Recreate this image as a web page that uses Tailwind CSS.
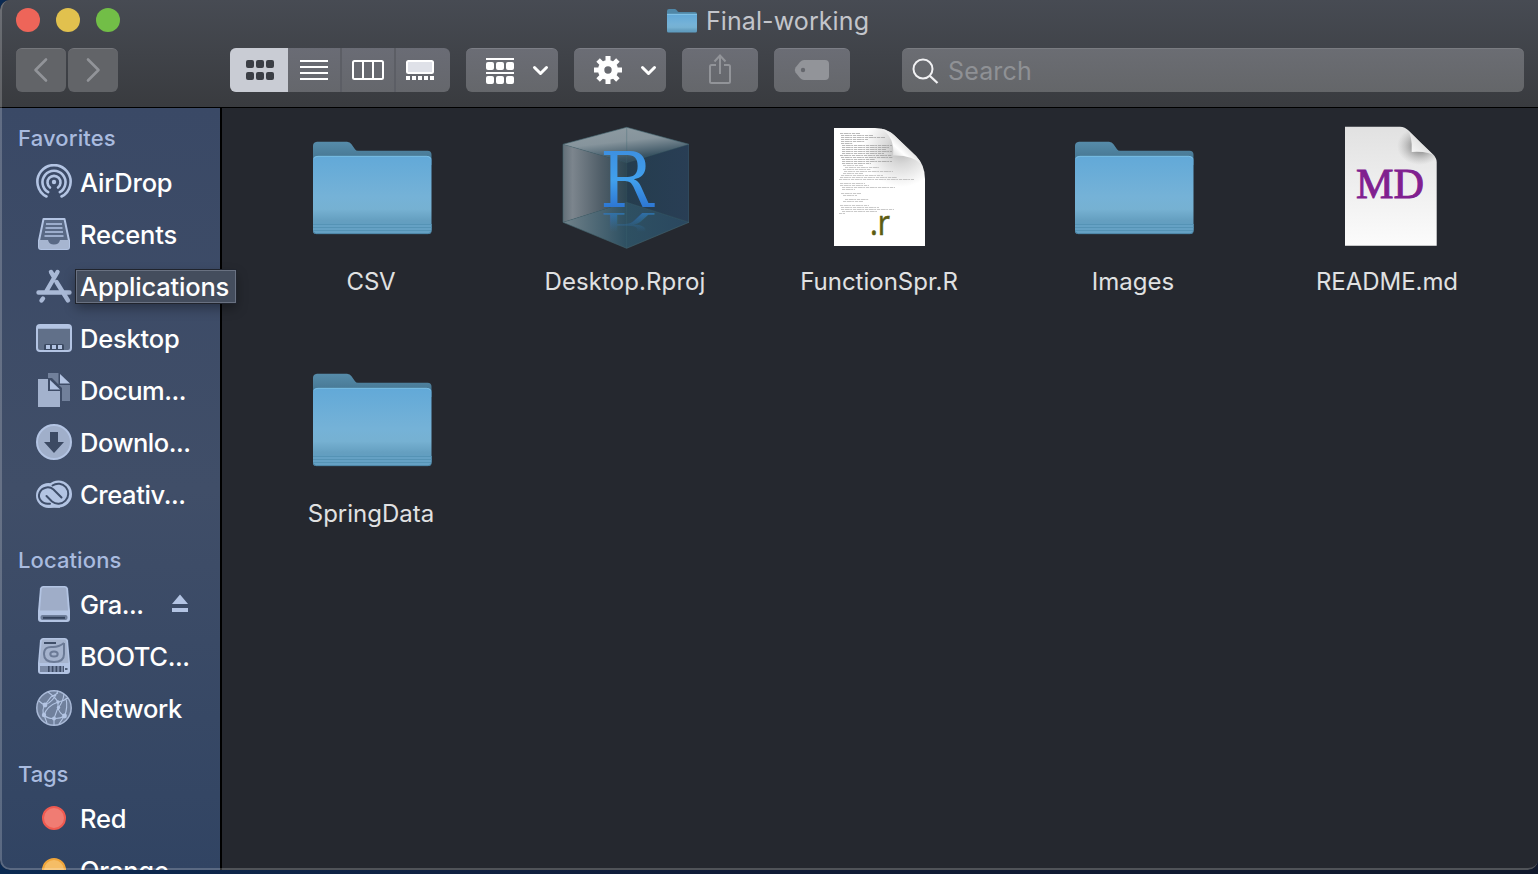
<!DOCTYPE html>
<html lang="en">
<head>
<meta charset="utf-8">
<title>Final-working</title>
<script src="https://cdn.jsdelivr.net/npm/@tailwindcss/browser@4"></script>
</head>
<body class="w-[1538px] h-[874px] overflow-hidden bg-gradient-to-r from-[#0b2a52] via-[#101a35] to-[#10182b] font-['Inter','Liberation_Sans',sans-serif]">
<svg width="0" height="0" class="absolute">
  <defs>
    <linearGradient id="front" x1="0" y1="0" x2="0" y2="1"><stop offset="0" stop-color="#62a9d8"/><stop offset=".55" stop-color="#75b2d7"/><stop offset=".72" stop-color="#76b1d2"/><stop offset=".87" stop-color="#659fc0"/><stop offset="1" stop-color="#5c9bc0"/></linearGradient>
    <linearGradient id="back" x1="0" y1="0" x2="0" y2="1"><stop offset="0" stop-color="#568caa"/><stop offset="1" stop-color="#416f8a"/></linearGradient>
    <symbol id="folder" viewBox="0 0 128 128">
      <path d="M6 40V23q0-4 4-4.300H40q3 0 4.500 2.500l3.500 5q1 1.500 3 1.500H120.500q4 0 4 4V42z" fill="url(#back)"/>
      <path d="M6 107V37q0-4 4-4H120.500q4 0 4 4V107z" fill="url(#front)"/>
      <path d="M7 35.500q1-2.200 4-2.200H119.500q3 0 4 2.200" fill="none" stroke="#80c3e6" stroke-width=".8"/>
      <path d="M6 101H124.500V108q0 3-3 3H9q-3 0-3-3z" fill="#65a1c4"/>
      <path d="M6 101.500H124.500M6 104.500H124.500M6 107.500H124.500" stroke="#528fb1" stroke-width=".8"/>
      <path d="M6.500 108.500q.5 2.200 3 2.200H121q2.500 0 3-2.200" fill="none" stroke="#427b9a" stroke-width=".8"/>
    </symbol>
  </defs>
</svg>
<div class="relative flex h-[870px] w-[1538px] flex-col overflow-hidden rounded-bl-[10px] rounded-br-[10px] rounded-tl-[10px] bg-[#25282f]">
  <header class="h-[108px] shrink-0 border-b border-black bg-gradient-to-b from-[#474b53] to-[#393b3f]">
    <div class="grid h-12 grid-cols-[1fr_auto_1fr] pr-[2px]">
      <div class="flex gap-4 pt-2 pl-4">
        <i class="size-6 rounded-full bg-[#ee6559]"></i><i class="size-6 rounded-full bg-[#e1c14e]"></i><i class="size-6 rounded-full bg-[#72be47]"></i>
      </div>
      <div class="flex h-[42px] items-center gap-[9px]">
        <svg width="30" height="25" viewBox="0 2 30 25"><path d="M0 10V4q0-2 2-2H8q1 0 2 1.500T12 5H28q2 0 2 2v4z" fill="#4f87a7"/><path d="M0 7H30V24q0 1.500-1.500 1.500h-27Q0 25.500 0 24z" fill="url(#front)"/><path d="M0 7.300H30" stroke="#8fcdec" stroke-width=".8"/></svg>
        <span class="text-[25px] leading-none tracking-[0.1px] text-[#c3c5cb]">Final-working</span>
      </div>
    </div>
    <div class="flex h-11 pl-4">
      <div class="flex w-[102px] gap-[2px]">
        <div class="flex w-[50px] items-center justify-center rounded-md border-t border-[#75777c] bg-[#626468]"><svg width="50" height="43" viewBox="0 1 50 43" fill="none" stroke="#929499" stroke-width="2.600" stroke-linecap="round" stroke-linejoin="round"><path d="M30 11.500L19.500 22L30 32.500"/></svg></div>
        <div class="flex w-[50px] items-center justify-center rounded-md border-t border-[#75777c] bg-[#626468]"><svg width="50" height="43" viewBox="0 1 50 43" fill="none" stroke="#929499" stroke-width="2.600" stroke-linecap="round" stroke-linejoin="round"><path d="M20 11.500L30.500 22L20 32.500"/></svg></div>
      </div>
      <div class="ml-[112px] flex w-[220px] overflow-hidden rounded-md bg-gradient-to-b from-[#6a6c75] to-[#65676c]">
        <div class="w-[58px] bg-[#c9ccd4]"><svg width="58" height="44" fill="#3b3e45"><g id="six"><rect x="16" y="12" width="8" height="8" rx="2"/><rect x="26" y="12" width="8" height="8" rx="2"/><rect x="36" y="12" width="8" height="8" rx="2"/></g><use href="#six" y="12"/></svg></div>
        <div class="w-[54px] border-r-2 border-[#5c5e65]"><svg width="52" height="44"><path d="M12 13H40M12 19H40M12 25H40M12 31H40" stroke="#fff" stroke-width="2"/></svg></div>
        <div class="w-[54px] border-r-2 border-[#5c5e65]"><svg width="52" height="44" fill="none" stroke="#fff" stroke-width="2"><rect x="11" y="13" width="30" height="18" rx="1.500"/><path d="M21 13V31M31 13V31"/></svg></div>
        <div class="w-[54px]"><svg width="54" height="44"><rect x="11" y="13" width="26" height="12" rx="1.500" fill="#dfe1e8" stroke="#fff" stroke-width="2"/><path d="M10 30H38" stroke="#fff" stroke-width="4" stroke-dasharray="4 2"/></svg></div>
      </div>
      <div class="ml-4 w-[92px] rounded-md border-t border-[#7c7e86] bg-gradient-to-b from-[#6b6d75] to-[#65676b]"><svg width="92" height="43" viewBox="0 1 92 43" fill="#fff"><path d="M20 10H48v2H20zM20 24H48v2H20z"/><g id="trio"><rect x="20" y="14" width="8" height="8" rx="2"/><rect x="30" y="14" width="8" height="8" rx="2"/><rect x="40" y="14" width="8" height="8" rx="2"/></g><use href="#trio" y="14"/><path d="M68.500 19.500L74.500 25.500L80.500 19.500" fill="none" stroke="#fff" stroke-width="3" stroke-linecap="round" stroke-linejoin="round"/></svg></div>
      <div class="ml-4 w-[92px] rounded-md border-t border-[#7c7e86] bg-gradient-to-b from-[#6b6d75] to-[#65676b]"><svg width="92" height="43" viewBox="0 1 92 43" fill="none" stroke="#fff"><circle cx="34" cy="22" r="6.900" stroke-width="6.400"/><path d="M34 8v5M34 31v5M20 22h5M43 22h5M24.100 12.100l3.500 3.500M40.400 28.400l3.500 3.500M43.900 12.100l-3.500 3.500M27.600 28.400l-3.500 3.500" stroke-width="5"/><path d="M68.500 19.500L74.500 25.500L80.500 19.500" stroke-width="3" stroke-linecap="round" stroke-linejoin="round"/></svg></div>
      <div class="ml-4 w-[76px] rounded-md border-t border-[#7c7e86] bg-gradient-to-b from-[#6b6d75] to-[#65676b]"><svg width="76" height="43" viewBox="0 1 76 43" fill="none" stroke="#929499" stroke-width="2"><path d="M34 17H29.500Q28 17 28 18.500V33.500Q28 35 29.500 35H46.500Q48 35 48 33.500V18.500Q48 17 46.500 17H42M38 26V8M32.500 13.500L38 7.500L43.500 13.500"/></svg></div>
      <div class="ml-4 w-[76px] rounded-md border-t border-[#7c7e86] bg-gradient-to-b from-[#6b6d75] to-[#65676b]"><svg width="76" height="43" viewBox="0 1 76 43"><path d="M30 12H51Q55 12 55 16V28Q55 32 51 32H30Q28 32 26 30L21.500 24.500Q20 22 21.500 19.500L26 14Q28 12 30 12z" fill="#929499"/><circle cx="29" cy="22" r="2.200" fill="#65676d"/></svg></div>
      <div class="ml-[52px] flex w-[622px] items-center rounded-md border-t border-[#7a7c81] bg-gradient-to-b from-[#6b6d73] to-[#646669]">
        <svg width="46" height="43" viewBox="0 1 46 43" fill="none" stroke="#f1f1f3" stroke-width="2"><circle cx="21" cy="21" r="9.500"/><path d="M28 28L35.500 35" stroke-width="2.300"/></svg>
        <span class="pt-[2px] text-[25px] leading-none tracking-[0.15px] text-[#8f9195]">Search</span>
      </div>
    </div>
  </header>
  <div class="flex min-h-0 flex-1">
    <nav class="flex w-[222px] shrink-0 flex-col gap-5 border-r-2 border-black bg-gradient-to-b from-[#3a4966] via-[#404e68] to-[#314463] pt-[11px] pl-[18px] text-[25.5px] font-medium tracking-[-0.2px] whitespace-nowrap text-white">
      <section>
        <h2 class="flex h-[38px] items-center text-[22px] tracking-[0.15px] text-[#a9bbdf]">Favorites</h2>
        <div class="flex h-[52px] items-center gap-2 pl-[18px]"><svg width="36" height="38" viewBox="0 0 36 38" class="shrink-0" fill="none" stroke="#b3c4e3" stroke-width="2.600" stroke-linecap="round"><path d="M10.500 32.500A16.600 16.600 0 1 1 25.500 32.500"/><path d="M12.200 28.200A11.500 11.500 0 1 1 23.800 28.200"/><path d="M14 23.500A6.500 6.500 0 1 1 22 23.500"/><circle cx="18" cy="18" r="2.200" fill="#b3c4e3" stroke="none"/></svg><span>AirDrop</span></div>
        <div class="flex h-[52px] items-center gap-2 pl-[18px]"><svg width="36" height="38" viewBox="0 0 36 38" class="shrink-0"><path d="M7.500 3H28.500L33 24.500V31q0 2-2 2H5q-2 0-2-2V24.500z" fill="#596985" stroke="#b3c4e3" stroke-width="2" stroke-linejoin="round"/><path d="M3 24H12Q13 28.500 18 28.500T24 24H33V31q0 2-2 2H5q-2 0-2-2z" fill="#a6b5d0"/><path d="M10 8H26M9.500 12H26.500M9 16H27M8.500 20H27.500" stroke="#b3c4e3" stroke-width="1.700"/></svg><span>Recents</span></div>
        <div class="relative flex h-[52px] items-center pl-[18px]"><svg width="36" height="38" viewBox="0 0 36 38" class="shrink-0" fill="none" stroke="#a9b9d6" stroke-width="4.400" stroke-linecap="round"><path d="M2.500 24.500H33.500M21.500 4L10.500 23M15 4L18 9M20.500 14L32 32.500M7 30.500L5.500 32.500"/></svg>
          <div class="absolute top-[9px] left-[58px] z-10 flex h-[33px] w-[160px] items-center border border-[#697181] bg-[#444d5d] pt-[2px] pl-[3px] shadow-[0_0_0_1px_#20242d,0_5px_12px_rgba(0,0,0,0.35)]">Applications</div>
        </div>
        <div class="flex h-[52px] items-center gap-2 pl-[18px]"><svg width="36" height="38" viewBox="0 0 36 38" class="shrink-0"><rect x="1" y="5" width="34" height="26" rx="3" fill="#617089" stroke="#b3c4e3" stroke-width="2"/><path d="M2 7H34" stroke="#b3c4e3" stroke-width="3.500"/><path d="M8 30V25.500q0-1.500 1.500-1.500H26.500q1.500 0 1.500 1.500V30z" fill="#3c4a62"/><path d="M10 27H26" stroke="#b3c4e3" stroke-width="4" stroke-dasharray="4 2"/></svg><span>Desktop</span></div>
        <div class="flex h-[52px] items-center gap-2 pl-[18px]"><svg width="36" height="38" viewBox="0 0 36 38" class="shrink-0"><path d="M12 1H22.500V13H34V29H26V16L16 6H12z" fill="#71809b"/><path d="M24 2L34 11.500H24z" fill="#b3c4e3"/><path d="M2 7H12V19H24V35H2z" fill="#a3b2cd"/><path d="M14 8L24 17.500H14z" fill="#b3c4e3"/></svg><span class="tracking-[-0.45px]">Docum...</span></div>
        <div class="flex h-[52px] items-center gap-2 pl-[18px]"><svg width="36" height="38" viewBox="0 0 36 38" class="shrink-0"><circle cx="18" cy="18" r="17" fill="#a0afca" stroke="#b3c4e3" stroke-width="2"/><path d="M14 8H22V18H28L18 29L8 18H14z" fill="#3c4a63"/></svg><span class="tracking-[-0.5px]">Downlo...</span></div>
        <div class="flex h-[52px] items-center gap-2 pl-[18px]"><svg width="36" height="38" viewBox="0 0 36 38" class="shrink-0"><g fill="#b3c4e3"><circle cx="12.500" cy="19.500" r="12.500"/><circle cx="22.500" cy="18" r="13.500"/><path d="M12 24H24V31.800H12z"/></g><g fill="none" stroke="#3f4e6a" stroke-width="2" stroke-linecap="round"><path d="M14 27.800H12A8.700 8.200 0 1 1 17.500 13.500L25.500 21.500"/><path d="M16.500 9.500A10 10 0 1 1 16 25.500L10.500 20"/></g></svg><span class="tracking-[-0.4px]">Creativ...</span></div>
      </section>
      <section>
        <h2 class="flex h-[38px] items-center text-[22px] tracking-[0.1px] text-[#a9bbdf]">Locations</h2>
        <div class="flex h-[52px] items-center gap-2 pl-[18px]"><svg width="36" height="38" viewBox="0 0 36 38" class="shrink-0"><path d="M7 0H29q2.500 0 3 2.500L34 25v8q0 3-3 3H5q-3 0-3-3V25L4 2.500Q4.500 0 7 0z" fill="#b3c4e3"/><path d="M7.500 1.500H28.500q1.500 0 1.800 1.500L32 24.500H4L5.700 3q.3-1.500 1.800-1.500z" fill="#9fadc8"/><rect x="4.500" y="29" width="27" height="5" rx="2" fill="#6f7f9b"/><path d="M7 31.800H29" stroke="#34435d" stroke-width="2"/></svg><span class="w-[64px] tracking-[-0.5px]">Gra...</span><svg width="16" height="22" viewBox="0 0 16 22" class="ml-[20px]" fill="#b3c4e3"><path d="M8 .5L16 10H0zM0 14H16v4H0z"/></svg></div>
        <div class="flex h-[52px] items-center gap-2 pl-[18px]"><svg width="36" height="38" viewBox="0 0 36 38" class="shrink-0"><path d="M7 0H29q2.500 0 3 2.500L34 25v8q0 3-3 3H5q-3 0-3-3V25L4 2.500Q4.500 0 7 0z" fill="#b3c4e3"/><path d="M7.500 1.500H28.500q1.500 0 1.800 1.500L32.500 25H3.500L5.700 3q.3-1.500 1.800-1.500z" fill="#a5b3cd"/><path d="M8 5H20" stroke="#3f4e68" stroke-width="2"/><path d="M28 5V16Q28 24 18 24T8 16T17 9Q23 9 28 5" fill="none" stroke="#6b7a96" stroke-width="2"/><ellipse cx="18" cy="16" rx="3.700" ry="2.600" fill="none" stroke="#6b7a96" stroke-width="2"/><rect x="4" y="28" width="24" height="6" fill="#7b8aa6"/><path d="M12 31H28" stroke="#3c4a64" stroke-width="6" stroke-dasharray="1.600 2.200"/><rect x="29" y="30" width="2.500" height="2" fill="#4f5e78"/></svg><span class="tracking-[-0.4px]">BOOTC...</span></div>
        <div class="flex h-[52px] items-center gap-2 pl-[18px]"><svg width="36" height="38" viewBox="0 0 36 38" class="shrink-0"><circle cx="18" cy="18" r="17.200" fill="#70809c" stroke="#a9b9d7" stroke-width="1.500"/><g fill="none" stroke="#b3c4e3" stroke-width="1.100"><path d="M3 11Q6 14 9 15Q17 12 22 1M9 15Q5.500 20 8 25Q12 29 18 28.500Q24 29 28.500 26Q23 23 22 17.500V12Q19 7 12 2M22 12Q28 11 32 8M22.500 17.500Q27 12 28 4M22 17.500Q20 23 18 28.500V35M8 25L11 33M9 15L15 7L22 3M22 12Q11 16 8 25M28.500 26Q32 18 30 8M28.500 26L23 34"/></g><g fill="#b3c4e3"><circle cx="9" cy="15" r="2.400"/><circle cx="22" cy="12" r="1.700"/><circle cx="22.500" cy="17.500" r="1.700"/><circle cx="8" cy="25" r="2.200"/><circle cx="18" cy="28.500" r="2"/><circle cx="28.500" cy="26" r="2.400"/></g></svg><span class="tracking-[-0.3px]">Network</span></div>
      </section>
      <section>
        <h2 class="flex h-[38px] items-center text-[22px] tracking-[-0.1px] text-[#a9bbdf]">Tags</h2>
        <div class="flex h-[52px] items-center gap-[14px] pl-6"><i class="mb-[2px] size-6 rounded-full border-2 border-[#ef5a50] bg-[#f07c73]"></i><span>Red</span></div>
        <div class="flex h-[52px] items-center gap-[14px] pl-6"><i class="mb-[2px] size-6 rounded-full border-2 border-[#f0a53a] bg-[#f5bd66]"></i><span>Orange</span></div>
      </section>
    </nav>
    <main class="grid flex-1 auto-rows-[232px] grid-cols-[repeat(5,254px)] content-start pt-[15px] pl-[22px] text-[24px] leading-none text-[#e0e1e2]">
      <figure class="flex flex-col items-center"><svg width="128" height="128"><use href="#folder"/></svg><figcaption class="mt-[19px] tracking-[-0.2px]">CSV</figcaption></figure>
      <figure class="flex flex-col items-center">
        <svg width="128" height="128" viewBox="0 0 128 128">
          <defs>
            <linearGradient id="cl" x1="0" x2="1"><stop offset="0" stop-color="#626f78"/><stop offset=".15" stop-color="#7c858d"/><stop offset=".6" stop-color="#505e68"/><stop offset="1" stop-color="#2c4552"/></linearGradient>
            <linearGradient id="ct" x1=".3" y1="0" x2=".7" y2="1"><stop offset="0" stop-color="#8e9ba2"/><stop offset=".4" stop-color="#86949c"/><stop offset=".8" stop-color="#3c5564"/><stop offset="1" stop-color="#2d4555"/></linearGradient>
            <linearGradient id="cb" x1="0" x2="1"><stop offset="0" stop-color="#71828a"/><stop offset=".5" stop-color="#2e5062"/><stop offset="1" stop-color="#2a475f"/></linearGradient>
            <linearGradient id="cr" x1="0" x2="1"><stop offset="0" stop-color="#253d4e"/><stop offset="1" stop-color="#293e55"/></linearGradient>
            <linearGradient id="rf" x1="0" y1="0" x2="0" y2="1"><stop offset=".15" stop-color="#3d8fe0"/><stop offset=".5" stop-color="#41a0ec"/><stop offset=".85" stop-color="#2a70cf"/></linearGradient>
            <linearGradient id="rr" gradientUnits="userSpaceOnUse" x1="0" y1="-50" x2="0" y2="0"><stop offset=".1" stop-color="#2f70a8" stop-opacity="0"/><stop offset="1" stop-color="#2f78b8" stop-opacity=".8"/></linearGradient>
          </defs>
          <path d="M2 21.300L65.700 39.700V79.300L2 99.300z" fill="url(#cl)"/>
          <path d="M128 21.300L65.700 39.700V79.300L128 99.300z" fill="url(#cr)"/>
          <path d="M2 99.300L65.700 79.300L128 99.300L65.700 125.300z" fill="url(#cb)"/>
          <path d="M65.700 4.300L128 21.300L65.700 39.700L2 21.300z" fill="url(#ct)"/>
          <path d="M65.700 4.300V125.300M2 21.300L65.700 39.700L128 21.300M2 99.300L65.700 79.300L128 99.300" fill="none" stroke="#3c6674" stroke-opacity=".35"/>
          <path d="M65.700 4.300L128 21.300V99.300L65.700 125.300L2 99.300V21.300z" fill="none" stroke="#44656f" stroke-opacity=".6"/>
          <text x="39" y="83.500" font-family="DejaVu Serif, serif" font-size="77" textLength="53" lengthAdjust="spacingAndGlyphs" fill="url(#rf)">R</text>
          <g transform="translate(39 90) scale(1 -.42)"><text x="0" y="0" font-family="DejaVu Serif, serif" font-size="77" textLength="53" lengthAdjust="spacingAndGlyphs" fill="url(#rr)">R</text></g>
        </svg><figcaption class="mt-[19px] tracking-[0.1px]">Desktop.Rproj</figcaption></figure>
      <figure class="flex flex-col items-center">
        <svg width="128" height="128" viewBox="0 0 128 128">
          <defs><linearGradient id="curl" gradientUnits="userSpaceOnUse" x1="80" y1="36" x2="93" y2="22"><stop offset="0" stop-color="#d8d8d8"/><stop offset=".5" stop-color="#fff"/><stop offset="1" stop-color="#dedede"/></linearGradient>
          <radialGradient id="shade" gradientUnits="userSpaceOnUse" cx="86" cy="26" r="38"><stop offset="0" stop-color="#b4b4b4"/><stop offset=".4" stop-color="#d9d9d9"/><stop offset="1" stop-color="#fff"/></radialGradient></defs>
          <path d="M19 5H60Q71 5 79 12L101 33Q110 42 110 56V123H19z" fill="url(#shade)"/>
          <path d="M66 5.500Q75 8 79 12L101 33Q104 36 106 41Q98 32 78 32.500Q80 14 66 5.500z" fill="url(#curl)"/>
          <g fill="none" stroke="#8c8c8c" stroke-width=".6" stroke-dasharray="3 .7 5 .5 2 .8">
            <path d="M25 10.500H45M26 12.500H58M26 14.500H70M26 16.500H53M26 18.500H50M26 20.500H38M27 22.500H77M27 24.500H74M27 26.500H71M27 28.500H77M27 30.500H69M25 32.500H77M26 34.500H78M27 36.500H60M27 38.500H77M27 40.500H56"/>
            <path stroke="#a5a5a5" d="M28 42.500H48M30 44.500H64M28 46.500H56M29 48.500H78M28 50.500H48M26 52.500H68M25 54.500H82M24 56.500H99M25 60.500H50M25 62.500H54M27 64.500H80M27 66.500H40M26 70.500H46M28 72.500H42M30 76.500H54M28 78.500H48M25 82.500H54M26 84.500H64M26 86.500H79M27 88.500H62M24 90.500H30"/>
          </g>
          <text x="55" y="112" font-family="Open Sans, sans-serif" font-size="34" textLength="20" lengthAdjust="spacingAndGlyphs" fill="#5c5c12" stroke="#5c5c12" stroke-width=".6">.r</text>
        </svg><figcaption class="mt-[19px]">FunctionSpr.R</figcaption></figure>
      <figure class="flex flex-col items-center"><svg width="128" height="128"><use href="#folder"/></svg><figcaption class="mt-[19px]">Images</figcaption></figure>
      <figure class="flex flex-col items-center">
        <svg width="128" height="128" viewBox="0 0 128 128">
          <defs><linearGradient id="pg" x1="0" y1="0" x2="0" y2="1"><stop offset="0" stop-color="#e1e1e1"/><stop offset="1" stop-color="#fcfcfc"/></linearGradient>
          <radialGradient id="fs"><stop offset="0" stop-color="#666"/><stop offset=".45" stop-color="#888" stop-opacity=".6"/><stop offset="1" stop-color="#aaa" stop-opacity="0"/></radialGradient>
          <linearGradient id="fd" x1="0" y1="1" x2=".6" y2=".4"><stop offset="0" stop-color="#fff"/><stop offset="1" stop-color="#dedede"/></linearGradient>
          <clipPath id="pc"><path d="M22 3.700H77Q82 3.700 85.500 7.500L110 31.500Q113.700 35 113.700 39V122.700H22z"/></clipPath></defs>
          <g clip-path="url(#pc)"><path d="M22 3H114V123H22z" fill="url(#pg)"/><ellipse cx="97" cy="23" rx="23" ry="19" fill="url(#fs)"/></g>
          <path d="M84 6.500L112 33.500Q106 28 88.700 29Q89.500 12 84 6.500z" fill="url(#fd)"/>
          <text x="33" y="75" font-family="Liberation Serif, serif" font-size="42" textLength="68" lengthAdjust="spacingAndGlyphs" fill="#80208f" stroke="#80208f" stroke-width=".9">MD</text>
        </svg><figcaption class="mt-[19px] tracking-[-0.05px]">README.md</figcaption></figure>
      <figure class="flex flex-col items-center"><svg width="128" height="128"><use href="#folder"/></svg><figcaption class="mt-[19px]">SpringData</figcaption></figure>
    </main>
  </div>
  <div class="pointer-events-none absolute inset-0 rounded-[10px] rounded-tr-none border-b-2 border-l-2 border-white/20"></div>
</div>
</body>
</html>
